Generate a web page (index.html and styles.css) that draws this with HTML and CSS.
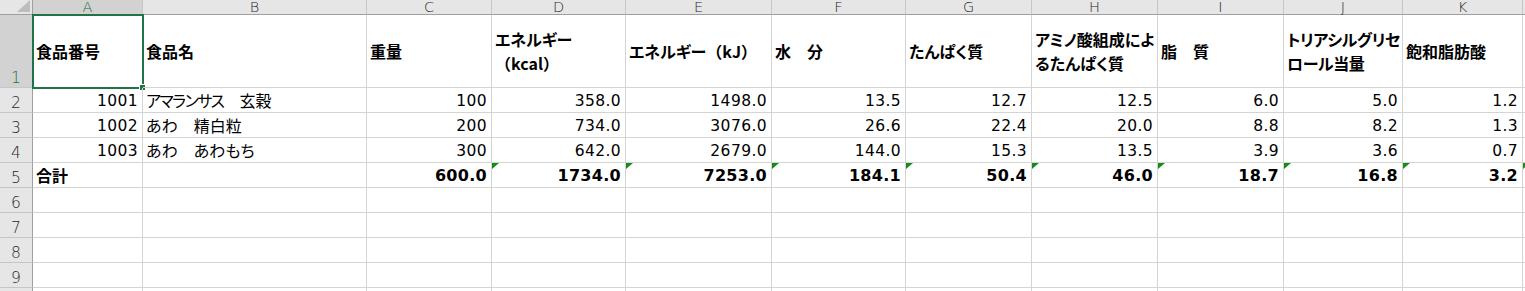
FILE: index.html
```html
<!DOCTYPE html>
<html lang="ja">
<head>
<meta charset="utf-8">
<title>食品成分表</title>
<link rel="stylesheet" href="styles.css">
</head>
<body>
<div class="sheet">
  <!-- column header strip -->
  <div class="corner"><span class="corner-tri"></span></div>
  <div class="colhead sel">A</div>
  <div class="colhead">B</div>
  <div class="colhead">C</div>
  <div class="colhead">D</div>
  <div class="colhead">E</div>
  <div class="colhead">F</div>
  <div class="colhead">G</div>
  <div class="colhead">H</div>
  <div class="colhead">I</div>
  <div class="colhead">J</div>
  <div class="colhead">K</div>
  <div class="colhead last"></div>

  <!-- row 1 -->
  <div class="rowhead sel">1</div>
  <div class="cell hd active"><span class="label">食品番号</span><span class="selection"><span class="handle"></span></span></div>
  <div class="cell hd"><span class="label">食品名</span></div>
  <div class="cell hd"><span class="label">重量</span></div>
  <div class="cell hd"><span class="label">エネルギー<br><span class="fw">（</span>kcal<span class="fw">）</span></span></div>
  <div class="cell hd"><span class="label">エネルギー<span class="fw">（</span>kJ<span class="fw">）</span></span></div>
  <div class="cell hd"><span class="label">水　分</span></div>
  <div class="cell hd"><span class="label">たんぱく質</span></div>
  <div class="cell hd"><span class="label">アミノ酸組成によ<br>るたんぱく質</span></div>
  <div class="cell hd"><span class="label">脂　質</span></div>
  <div class="cell hd tight"><span class="label">トリアシルグリセ<br>ロール当量</span></div>
  <div class="cell hd"><span class="label">飽和脂肪酸</span></div>
  <div class="cell last"></div>

  <!-- row 2 -->
  <div class="rowhead">2</div>
  <div class="cell num">1001</div>
  <div class="cell txt"><span class="kana">アマランサス</span>　玄穀</div>
  <div class="cell num">100</div>
  <div class="cell num">358.0</div>
  <div class="cell num">1498.0</div>
  <div class="cell num">13.5</div>
  <div class="cell num">12.7</div>
  <div class="cell num">12.5</div>
  <div class="cell num">6.0</div>
  <div class="cell num">5.0</div>
  <div class="cell num">1.2</div>
  <div class="cell last"></div>

  <!-- row 3 -->
  <div class="rowhead">3</div>
  <div class="cell num">1002</div>
  <div class="cell txt">あわ　精白粒</div>
  <div class="cell num">200</div>
  <div class="cell num">734.0</div>
  <div class="cell num">3076.0</div>
  <div class="cell num">26.6</div>
  <div class="cell num">22.4</div>
  <div class="cell num">20.0</div>
  <div class="cell num">8.8</div>
  <div class="cell num">8.2</div>
  <div class="cell num">1.3</div>
  <div class="cell last"></div>

  <!-- row 4 -->
  <div class="rowhead">4</div>
  <div class="cell num">1003</div>
  <div class="cell txt">あわ　あわもち</div>
  <div class="cell num">300</div>
  <div class="cell num">642.0</div>
  <div class="cell num">2679.0</div>
  <div class="cell num">144.0</div>
  <div class="cell num">15.3</div>
  <div class="cell num">13.5</div>
  <div class="cell num">3.9</div>
  <div class="cell num">3.6</div>
  <div class="cell num">0.7</div>
  <div class="cell last"></div>

  <!-- row 5 totals -->
  <div class="rowhead">5</div>
  <div class="cell txt bold">合計</div>
  <div class="cell"></div>
  <div class="cell num bold">600.0</div>
  <div class="cell num bold flag">1734.0</div>
  <div class="cell num bold flag">7253.0</div>
  <div class="cell num bold flag">184.1</div>
  <div class="cell num bold flag">50.4</div>
  <div class="cell num bold flag">46.0</div>
  <div class="cell num bold flag">18.7</div>
  <div class="cell num bold flag">16.8</div>
  <div class="cell num bold flag">3.2</div>
  <div class="cell last flag"></div>

  <!-- empty rows 6-10 -->
  <div class="rowhead">6</div>
  <div class="cell"></div><div class="cell"></div><div class="cell"></div><div class="cell"></div><div class="cell"></div><div class="cell"></div><div class="cell"></div><div class="cell"></div><div class="cell"></div><div class="cell"></div><div class="cell"></div><div class="cell last"></div>
  <div class="rowhead">7</div>
  <div class="cell"></div><div class="cell"></div><div class="cell"></div><div class="cell"></div><div class="cell"></div><div class="cell"></div><div class="cell"></div><div class="cell"></div><div class="cell"></div><div class="cell"></div><div class="cell"></div><div class="cell last"></div>
  <div class="rowhead">8</div>
  <div class="cell"></div><div class="cell"></div><div class="cell"></div><div class="cell"></div><div class="cell"></div><div class="cell"></div><div class="cell"></div><div class="cell"></div><div class="cell"></div><div class="cell"></div><div class="cell"></div><div class="cell last"></div>
  <div class="rowhead">9</div>
  <div class="cell"></div><div class="cell"></div><div class="cell"></div><div class="cell"></div><div class="cell"></div><div class="cell"></div><div class="cell"></div><div class="cell"></div><div class="cell"></div><div class="cell"></div><div class="cell"></div><div class="cell last"></div>
  <div class="rowhead"></div>
  <div class="cell"></div><div class="cell"></div><div class="cell"></div><div class="cell"></div><div class="cell"></div><div class="cell"></div><div class="cell"></div><div class="cell"></div><div class="cell"></div><div class="cell"></div><div class="cell"></div><div class="cell last"></div>
</div>
</body>
</html>
```

FILE: styles.css
```css
html, body {
  margin: 0;
  padding: 0;
  background: #ffffff;
  overflow: hidden;
}

.sheet {
  display: grid;
  grid-template-columns: 33px 110px 224px 125px 134px 146px 134px 126px 126px 126px 119px 120px 1fr;
  grid-template-rows: 15px 73px repeat(9, 25px);
  width: 1525px;
  height: 291px;
  overflow: hidden;
  font-family: "Noto Sans CJK JP", sans-serif;
  color: #000000;
}

.sheet > div {
  box-sizing: border-box;
  min-width: 0;
}

/* top-left corner */
.corner {
  background: #e6e6e6;
  border-right: 1px solid #9f9f9f;
  border-bottom: 1px solid #9f9f9f;
  display: flex;
  justify-content: flex-end;
  align-items: flex-end;
  padding: 0 2px 2px 0;
}
.corner-tri {
  display: block;
  width: 13px;
  height: 12px;
  background: #bdbdbd;
  clip-path: polygon(100% 0, 100% 100%, 0 100%);
}

/* column letters */
.colhead {
  background: #e6e6e6;
  border-right: 1px solid #c6c6c6;
  border-bottom: 1px solid #9f9f9f;
  font-family: "DejaVu Sans", sans-serif;
  font-weight: 200;
  font-size: 14.5px;
  line-height: 14px;
  color: #262626;
  text-align: center;
}
.colhead.sel {
  background: #d2d2d2;
  color: #217346;
}
.colhead.last {
  border-right: none;
}

/* row numbers */
.rowhead {
  background: #e6e6e6;
  border-right: 1px solid #9f9f9f;
  border-bottom: 1px solid #c6c6c6;
  font-family: "DejaVu Sans", sans-serif;
  font-weight: 200;
  font-size: 15.5px;
  line-height: 16px;
  color: #262626;
  display: flex;
  justify-content: center;
  align-items: flex-end;
  padding-bottom: 1px;
}
.rowhead.sel {
  background: #d2d2d2;
  color: #217346;
}

/* grid cells */
.cell {
  position: relative;
  border-right: 1px solid #d4d4d4;
  border-bottom: 1px solid #d4d4d4;
  white-space: nowrap;
  overflow: visible;
}
.cell.last {
  border-right: none;
}

.hd {
  font-weight: bold;
  font-size: 16px;
  line-height: 24px;
  font-feature-settings: "palt";
  display: flex;
  align-items: center;
  padding: 0 3px;
  overflow: hidden;
}
.hd.active {
  overflow: visible;
}
.hd.tight .label {
  letter-spacing: -0.4px;
}
.label {
  display: block;
}
.fw {
  font-feature-settings: normal;
}

.txt {
  font-size: 16px;
  line-height: 24px;
  font-feature-settings: "palt";
  padding: 0 3px;
}
.kana {
  letter-spacing: -1.5px;
}

.num {
  font-family: "DejaVu Sans", "Noto Sans CJK JP", sans-serif;
  font-size: 15.5px;
  letter-spacing: 0.4px;
  line-height: 24px;
  padding: 1px 4px 0 3px;
  text-align: right;
}
.num.bold {
  font-size: 16px;
  letter-spacing: 0.3px;
}
.bold {
  font-weight: bold;
}

/* error indicator triangle */
.flag::before {
  content: "";
  position: absolute;
  left: 0;
  top: 0;
  width: 7px;
  height: 6px;
  background: #188a18;
  clip-path: polygon(0 0, 100% 0, 0 100%);
}

/* active cell selection */
.selection {
  position: absolute;
  left: -1px;
  top: -1px;
  width: 112px;
  height: 75px;
  box-sizing: border-box;
  border: 2px solid #217346;
  pointer-events: none;
}
.handle {
  position: absolute;
  right: -4px;
  bottom: -4px;
  width: 5px;
  height: 5px;
  background: #217346;
  border: 1px solid #ffffff;
}
```
